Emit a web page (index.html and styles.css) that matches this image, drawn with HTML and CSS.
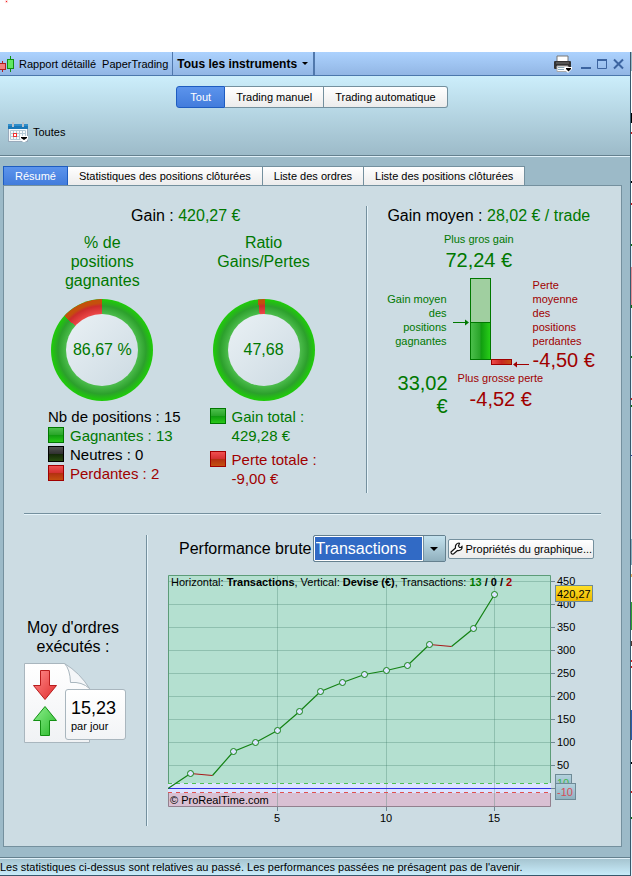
FILE: index.html
```html
<!DOCTYPE html>
<html lang="fr">
<head>
<meta charset="utf-8">
<title>Rapport détaillé</title>
<link rel="stylesheet" href="styles.css">
</head>
<body>
<div class="desktop">
  <span class="marker"></span>
  <main class="window">
    <header class="titlebar">
      <svg class="candles" width="15" height="18" viewBox="0 0 15 18" shape-rendering="crispEdges">
        <path d="M2.500 6v11" stroke="#b02020"/><rect x="-3.500" y="8.500" width="9" height="6" fill="#f08080" stroke="#b02020"/>
        <path d="M10.500 1v16" stroke="#109010"/><rect x="7.500" y="4.500" width="6" height="9" fill="#60e860" stroke="#109010"/>
      </svg>
      <span class="title">Rapport détaillé</span>
      <span class="account">PaperTrading</span>
      <button class="instruments" type="button">Tous les instruments <i class="caret"></i></button>
      <div class="window-actions">
        <button type="button" aria-label="Imprimer"><svg width="20" height="18" viewBox="0 0 20 18">
          <path d="M4 1h11v6H4z" fill="#fff" stroke="#777"/>
          <rect x="1" y="6" width="17" height="8" rx="1" fill="#333"/><path d="M3 8h13" stroke="#777"/>
          <path d="M4 11h11v5.500H4z" fill="#fff" stroke="#aaa"/><path d="M5 12.500h8M5 14.500h6" stroke="#8ab"/>
          <path d="M11.500 12h7.500v2l-4 4-4-4z" fill="#fff"/><path d="M13 13h5v1l-2.500 2.500L13 14z" fill="#000"/>
        </svg></button>
        <button type="button" aria-label="Réduire"><svg width="10" height="12" viewBox="0 0 10 12"><path d="M0 10h10" stroke="#3c64a0" stroke-width="2"/></svg></button>
        <button type="button" aria-label="Agrandir"><svg width="10" height="12" viewBox="0 0 10 12" fill="none"><path d="M.5 1v9.500h9V1" stroke="#3c64a0"/><path d="M0 2h10" stroke="#3c64a0" stroke-width="2"/></svg></button>
        <button type="button" aria-label="Fermer"><svg width="11" height="12" viewBox="0 0 11 12"><path d="M1 1.500l9 9M10 1.500l-9 9" stroke="#3c64a0" stroke-width="2"/></svg></button>
      </div>
    </header>

    <section class="filters">
      <div class="segmented">
        <button type="button" class="selected">Tout</button>
        <button type="button">Trading manuel</button>
        <button type="button">Trading automatique</button>
      </div>
      <button class="period" type="button">
        <svg width="20" height="20" viewBox="0 0 20 20">
          <rect x=".5" y="6.500" width="19" height="13" fill="#f6f9fb" stroke="#9ab"/>
          <path d="M0 2h20v5H0z" fill="#1a78b8"/><path d="M0 3h20" stroke="#48a4dc"/>
          <path d="M5 0v5M15 0v5" stroke="#b8c0c8" stroke-width="2"/>
          <path d="M2.500 8.500h15v9h-15zM2.500 11.500h15M2.500 14.500h15M5.500 8.500v9M8.500 8.500v9M11.500 8.500v9M14.500 8.500v9" fill="none" stroke="#b4cad6"/>
          <rect x="5.500" y="11.500" width="3" height="3" fill="#fff" stroke="#f03030"/>
          <path d="M12 14h8v3l-3 3h-2l-3-3z" fill="#fff"/><path d="M13 15h6v1l-3 2-3-2z" fill="#000"/>
        </svg>
        Toutes
      </button>
    </section>

    <nav class="tabs">
      <button type="button" class="selected">Résumé</button>
      <button type="button">Statistiques des positions clôturées</button>
      <button type="button">Liste des ordres</button>
      <button type="button">Liste des positions clôturées</button>
    </nav>

    <div class="panel">
      <div class="summary">
        <section class="totals">
          <h2>Gain : <b class="gain">420,27 €</b></h2>
          <div class="rings">
            <div class="ring-block">
              <h3>% de<br>positions<br>gagnantes</h3>
              <div class="ring ring-wins"><span>86,67 %</span></div>
              <ul class="legend">
                <li>Nb de positions : 15</li>
                <li class="gain"><i class="swatch green"></i>Gagnantes : 13</li>
                <li><i class="swatch black"></i>Neutres : 0</li>
                <li class="loss"><i class="swatch red"></i>Perdantes : 2</li>
              </ul>
            </div>
            <div class="ring-block">
              <h3>Ratio<br>Gains/Pertes</h3>
              <div class="ring ring-ratio"><span>47,68</span></div>
              <ul class="legend spaced">
                <li class="gain"><i class="swatch green"></i><span>Gain total :<br>429,28 €</span></li>
                <li class="loss"><i class="swatch red"></i><span>Perte totale :<br>-9,00 €</span></li>
              </ul>
            </div>
          </div>
        </section>

        <section class="averages">
          <h2>Gain moyen : <b class="gain">28,02 € / trade</b></h2>
          <div class="best gain"><span>Plus gros gain</span><strong>72,24 €</strong></div>
          <div class="compare">
            <div class="avg-gain gain"><span>Gain moyen des positions gagnantes</span><strong>33,02 €</strong></div>
            <div class="bars">
              <svg width="79" height="90" viewBox="0 0 79 90">
                <defs>
                  <linearGradient id="barGain"><stop offset="0" stop-color="#4cc04c"/><stop offset=".48" stop-color="#28a428"/><stop offset=".52" stop-color="#109c10"/><stop offset="1" stop-color="#28d018"/></linearGradient>
                  <linearGradient id="barLoss"><stop offset="0" stop-color="#f04c4c"/><stop offset=".5" stop-color="#c82820"/><stop offset="1" stop-color="#c45010"/></linearGradient>
                </defs>
                <rect x="17.500" y=".5" width="20" height="44" fill="#a0cfa0" stroke="#007800"/>
                <rect x="17.500" y="44.500" width="20" height="37" fill="url(#barGain)" stroke="#007800"/>
                <rect x="38.500" y="81.500" width="20" height="5" fill="url(#barLoss)" stroke="#a00000"/>
                <path d="M0 44.500h13" stroke="#007800"/><path d="M12 41.500l4 3-4 3z" fill="#007800"/>
                <path d="M64 86.500h12" stroke="#a00000"/><path d="M64 83.500l-4 3 4 3z" fill="#a00000"/>
              </svg>
              <div class="worst loss"><span>Plus grosse perte</span><strong>-4,52 €</strong></div>
            </div>
            <div class="avg-loss loss"><span>Perte moyenne des positions perdantes</span><strong>-4,50 €</strong></div>
          </div>
        </section>
      </div>

      <hr>

      <div class="performance">
        <section class="orders">
          <h2>Moy d'ordres<br>exécutés :</h2>
          <div class="sheet">
            <svg width="67" height="80" viewBox="0 0 67 80">
              <defs>
                <linearGradient id="paper" x2="0" y2="1"><stop offset="0" stop-color="#fff"/><stop offset="1" stop-color="#f0f2f4"/></linearGradient>
                <linearGradient id="down" x2="1" y2="1"><stop offset="0" stop-color="#ff8c8c"/><stop offset="1" stop-color="#e02c2c"/></linearGradient>
                <linearGradient id="up" x2="1" y2="1"><stop offset="0" stop-color="#90f090"/><stop offset="1" stop-color="#28b828"/></linearGradient>
              </defs>
              <path d="M.5.500h40L65.500 25.500v54H.5z" fill="url(#paper)" stroke="#a9b6be"/>
              <path d="M40.500.500Q46 6 46.500 19.500 58 18.500 65.500 25.500 56 10 40.500.500z" fill="#f4f6f8" stroke="#a9b6be"/>
              <path d="M16.500 7.500h9v15h7L21 36.500 9.500 22.500h7z" fill="url(#down)" stroke="#b81c1c"/>
              <path d="M16.500 72.500h9v-15h7L21 43.500 9.500 57.500h7z" fill="url(#up)" stroke="#129012"/>
            </svg>
            <div class="card"><strong>15,23</strong><span>par jour</span></div>
          </div>
        </section>

        <section class="chart">
          <div class="chart-tools">
            <label for="metric">Performance brute</label>
            <div class="combo">
              <select id="metric"><option>Transactions</option></select>
              <span class="combo-arrow"><i class="caret"></i></span>
            </div>
            <button class="properties" type="button">
              <svg width="13" height="13" viewBox="0 0 13 13"><path d="M1 10L5.500 6C5 3.500 6.500 1 9 1l.5.500-1 2.500 1 1.500h1.500L12 4.500c.5 2.500-1.500 4.500-4.500 4L3.500 12Q1 12.500 1 10z" fill="#fff" stroke="#111" stroke-width="1.200"/></svg>
              Propriétés du graphique...
            </button>
          </div>
          <svg class="plot" viewBox="0 0 433 251" role="img" aria-label="Performance brute par transaction">
            <defs>
              <linearGradient id="gold" x2="0" y2="1"><stop offset="0" stop-color="#ffe028"/><stop offset="1" stop-color="#ecb800"/></linearGradient>
              <linearGradient id="steel" x2="0" y2="1"><stop offset="0" stop-color="#b4d2de"/><stop offset="1" stop-color="#8eb0be"/></linearGradient>
            </defs>
            <rect x="0" y="0" width="383" height="208" fill="#b4e0d0"/>
            <rect x="0" y="208" width="383" height="10" fill="#dce4ff"/>
            <rect x="0" y="218" width="383" height="14" fill="#d9c0d3"/>
            <path d="M0 6.500h383M0 29.500h383M0 52.500h383M0 75.500h383M0 98.500h383M0 121.500h383M0 144.500h383M0 167.500h383M0 190.500h383M109.500 0v232M218.500 0v232M326.500 0v232" stroke="#3c7864" stroke-opacity=".3"/>
            <path d="M.5 208V.5h382V208" fill="none" stroke="#5c9c78"/>
            <path d="M.5 218v13.500h382V218" fill="none" stroke="#92808e"/>
            <path d="M383 6.500h4M383 29.500h4M383 52.500h4M383 75.500h4M383 98.500h4M383 121.500h4M383 144.500h4M383 167.500h4M383 190.500h4M383 213.500h4M109.500 232v4M218.500 232v4M326.500 232v4" stroke="#708894"/>
            <path d="M0 208.500h383" stroke="#50c050" stroke-dasharray="4 4"/>
            <path d="M0 217.500h383" stroke="#e05050" stroke-dasharray="4 4"/>
            <path d="M0 213.500h383" stroke="#3030e0"/>
            <g fill="none" stroke="#148214" stroke-width="1.200">
              <path d="M0 213.500L22.500 198.500M44.500 200.500L65.500 176.500 87.500 167.500 109.500 155.500 131.500 136.500 152.500 116.500 174.500 107.500 196.500 99.500 218.500 95.500 239.500 90.500 261.500 69.500M283.500 71.500L305.500 53.500 326.500 19.500"/>
              <path d="M22.500 198.500L44.500 200.500M261.500 69.500L283.500 71.500" stroke="#a81818"/>
            </g>
            <g fill="#dce4ff" stroke="#148214">
              <circle cx="22.500" cy="198.500" r="3"/><circle cx="65.500" cy="176.500" r="3"/><circle cx="87.500" cy="167.500" r="3"/><circle cx="109.500" cy="155.500" r="3"/><circle cx="131.500" cy="136.500" r="3"/><circle cx="152.500" cy="116.500" r="3"/><circle cx="174.500" cy="107.500" r="3"/><circle cx="196.500" cy="99.500" r="3"/><circle cx="218.500" cy="95.500" r="3"/><circle cx="239.500" cy="90.500" r="3"/><circle cx="261.500" cy="69.500" r="3"/><circle cx="305.500" cy="53.500" r="3"/><circle cx="326.500" cy="19.500" r="3"/>
            </g>
            <text x="3" y="11">Horizontal: <tspan class="strong">Transactions</tspan>, Vertical: <tspan class="strong">Devise (€)</tspan>, Transactions: <tspan class="strong won">13</tspan><tspan class="strong"> / 0 / </tspan><tspan class="strong lost">2</tspan></text>
            <text x="2" y="229">© ProRealTime.com</text>
            <g>
              <text x="389" y="10">450</text><text x="389" y="33">400</text><text x="389" y="56">350</text><text x="389" y="79">300</text><text x="389" y="102">250</text><text x="389" y="125">200</text><text x="389" y="148">150</text><text x="389" y="171">100</text><text x="389" y="194">50</text>
            </g>
            <g text-anchor="middle"><text x="109" y="247">5</text><text x="218" y="247">10</text><text x="326" y="247">15</text></g>
            <rect x="387.500" y="10.500" width="37" height="16" fill="url(#gold)" stroke="#6e8a96"/><text x="389" y="23">420,27</text>
            <rect x="387.500" y="199.500" width="16" height="16" fill="url(#steel)" stroke="#6e8a96"/><text x="389" y="212" class="limit-up">10</text>
            <rect x="387.500" y="208.500" width="20" height="16" fill="url(#steel)" stroke="#6e8a96"/><text x="389" y="221" class="limit-down">-10</text>
          </svg>
        </section>
      </div>
    </div>

    <footer>Les statistiques ci-dessus sont relatives au passé. Les performances passées ne présagent pas de l'avenir.</footer>
  </main>
</div>
</body>
</html>
```
FILE: styles.css
```css
* { box-sizing: border-box; }

body {
  margin: 0;
  font: 11px/14px "Liberation Sans", Arial, sans-serif;
  color: #000;
  background: #fff;
}

button {
  margin: 0;
  padding: 0;
  border: 0;
  background: none;
  font: inherit;
  color: inherit;
  white-space: nowrap;
}

h2, h3, ul { margin: 0; padding: 0; }

h2, h3 {
  font-size: 16px;
  line-height: 19px;
  font-weight: normal;
  text-align: center;
}

h2 b { font-weight: normal; }
svg { display: block; flex: none; }

.gain, h3 { color: #007800; }
.loss { color: #a00000; }

.desktop {
  position: relative;
  min-height: 100vh;
  padding: 52px 1px 0 0;
  background:
    linear-gradient(
      #fff 52px, #9cbac8 52px 71px, #fff 71px 113px,
      #000 113px 123px, #fff 123px 132px, #d02020 132px 134px, #fff 134px 181px,
      #000 181px 183px, #fff 183px 203px, #d02020 203px 205px, #fff 205px 244px,
      #107010 244px 246px, #e8f0fa 246px 267px, #e88c94 267px 305px,
      #107010 305px 308px, #e8f0fa 308px 356px, #107010 356px 358px,
      #e8f0fa 358px 398px, #d02020 398px 400px, #e8f0fa 400px 405px,
      #107010 405px 407px, #e8f0fa 407px 455px, #3040a0 455px 456px,
      #e8f0fa 456px 539px, #8cb0c0 539px 565px, #fff 565px 574px,
      #f0b060 574px 577px, #fff 577px 602px, #30a030 602px 630px,
      #fff 630px 641px, #503830 641px 646px, #fff 646px 660px,
      #d02020 660px 662px, #fff 662px 666px, #d02020 666px 668px,
      #fff 668px 710px, #2c5cac 710px 740px, #fff 740px 762px,
      #000 762px 764px, #fff 764px 791px, #d02020 791px 793px,
      #fff 793px 817px, #107010 817px 819px, #e8f0fa 819px
    ) right / 1px 100% no-repeat,
    #fff;
}

.marker {
  position: absolute;
  top: 1px;
  left: 6px;
  width: 1px;
  height: 1px;
  background: #f02020;
  box-shadow: 0 0 1px 1px #ffd8d8;
}

.window {
  display: flex;
  flex-direction: column;
  min-height: calc(100vh - 52px);
  border-right: 1px solid #38586c;
  background: #9cbac8;
}

.titlebar {
  display: flex;
  align-items: center;
  height: 24px;
  border-bottom: 1px solid #4c78ac;
  background: linear-gradient(#acd2fe, #92b6e4);
}

.title { margin-left: 4px; }
.account { margin: 0 4px 0 6px; }

.instruments {
  display: flex;
  align-items: center;
  gap: 5px;
  height: 23px;
  padding: 0 5px 0 4px;
  border-left: 1px solid #5078ac;
  border-right: 2px solid #5078ac;
  font-size: 12px;
  font-weight: bold;
}

.caret {
  border: solid transparent;
  border-width: 4px 4px 0;
  border-top-color: #000;
}

.instruments .caret { border-width: 3px 3px 0; border-top-color: #000; }

.window-actions {
  display: flex;
  align-items: center;
  gap: 6px;
  margin-left: auto;
  padding-right: 6px;
}

.window-actions button:first-child { margin-right: 2px; }

.filters {
  height: 81px;
  padding: 10px 6px 0 8px;
  border-bottom: 1px solid #e0f0f8;
  box-shadow: inset 0 -1px #64808e;
  background: linear-gradient(#cceefb, #9cbac8);
}

.segmented { display: flex; justify-content: center; margin-right: 8px; }

.segmented button, .tabs button {
  padding: 0 11px;
  border: 1px solid #74909e;
  background: linear-gradient(#fff, #ececec);
}

.segmented button { height: 22px; border-left-width: 0; }
.segmented button:first-child { padding: 0 13px; border-left-width: 1px; border-radius: 3px 0 0 3px; }
.segmented button:last-child { border-radius: 0 3px 3px 0; }

.segmented .selected, .tabs .selected {
  border-color: #1e5cc0;
  background: linear-gradient(#5c94ec, #427cdc);
  color: #fff;
}

.period { display: flex; align-items: center; gap: 5px; margin-top: 14px; }

.tabs { display: flex; margin: 9px 0 0 3px; }
.tabs button { height: 19px; border-left-width: 0; border-bottom-width: 0; }
.tabs button:first-child { border-left-width: 1px; }

.panel {
  flex: 1;
  margin: 0 8px 10px 3px;
  padding: 20px;
  border: 1px solid #74909e;
  background: #ccdce3;
}

.summary {
  display: grid;
  grid-template-columns: minmax(0, 19fr) minmax(0, 13fr);
  height: 287px;
}

.totals {
  padding-right: 24px;
  border-right: 1px solid #74909e;
  box-shadow: 1px 0 #e6f4fa;
}

.totals h2 { padding-left: 6px; }

.rings {
  display: grid;
  grid-template-columns: 1fr 1fr;
  gap: 5px;
  margin-top: 8px;
}

.ring-block { display: grid; grid-template-rows: 66px 102px auto; }

.ring {
  position: relative;
  display: grid;
  place-items: center;
  justify-self: center;
  width: 102px;
  height: 102px;
  border-radius: 50%;
  background: radial-gradient(circle, #4cbc4c 36px, #2ca02c 44px, #20c80c 50px);
  color: #007800;
  font-size: 16px;
}

.ring::before {
  content: "";
  position: absolute;
  inset: 0;
  border-radius: 50%;
  background: radial-gradient(circle, #ec4848 36px, #cc2c2c 44px, #c4500c 47px);
}

.ring-wins::before { mask-image: conic-gradient(transparent 312deg, #000 312deg); }
.ring-ratio::before { mask-image: conic-gradient(from -7deg, #000 8deg, transparent 8deg); }

.ring span {
  position: relative;
  display: grid;
  place-items: center;
  width: 72px;
  height: 72px;
  border-radius: 50%;
  background: linear-gradient(135deg, #eaf1f5, #ccdae2);
  white-space: nowrap;
}

.legend {
  margin-top: 6px;
  padding-left: 24px;
  list-style: none;
  font-size: 15px;
  line-height: 19px;
  white-space: nowrap;
}

.legend li { display: flex; gap: 6px; }
.legend.spaced { display: grid; gap: 5px; align-content: start; }

.swatch { width: 16px; height: 16px; margin-top: 1px; border: 1px solid; }
.green { border-color: #007800; background: linear-gradient(#4cc04c, #28a428 50%, #109c10 52%, #28c818); }
.black { border-color: #000; background: linear-gradient(#505050, #303030 50%, #142808 52%, #284c10); }
.red { border-color: #a00000; background: linear-gradient(#f05050, #d43030 50%, #b43010 52%, #c45010); }

.averages { padding-left: 10px; }
.averages strong { display: block; font-size: 20px; line-height: 24px; font-weight: normal; white-space: nowrap; }
.averages span { display: block; }

.best { margin-top: 7px; padding-right: 20px; text-align: center; }
.best strong { margin-top: 2px; }

.compare {
  display: grid;
  grid-template-columns: 73px 79px 1fr;
  margin-top: 6px;
}

.avg-gain { padding: 14px 2px 0 10px; text-align: right; }
.avg-gain span { padding-right: 1px; }
.avg-gain strong { margin-top: 24px; white-space: normal; line-height: 23px; }
.bars { padding-left: 3px; }
.worst { margin-top: 3px; white-space: nowrap; }
.worst span { padding-left: 5px; }
.worst strong { margin-top: 2px; padding-left: 17px; }
.avg-loss { padding-left: 4px; }
.avg-loss span { padding-right: 20px; }

hr {
  height: 2px;
  margin: 20px 0;
  border: 0;
  border-top: 1px solid #74909e;
  background: #e6f4fa;
}

.performance { display: flex; }

.orders {
  display: flex;
  flex-direction: column;
  justify-content: center;
  width: 123px;
  border-right: 1px solid #74909e;
  box-shadow: 1px 0 #e6f4fa;
}

.orders h2 { padding-right: 24px; }
.sheet { position: relative; margin-top: 7px; }

.card {
  position: absolute;
  top: 26px;
  left: 41px;
  width: 61px;
  height: 51px;
  padding: 8px 5px;
  border: 1px solid #a9b6be;
  border-radius: 3px;
  background: linear-gradient(#fff, #f2f4f6);
}

.card strong, .card span { display: block; }
.card strong { font-size: 18px; line-height: 21px; font-weight: normal; }

.chart { flex: 1; min-width: 0; padding-left: 21px; }

.chart-tools { display: flex; align-items: center; height: 27px; padding-left: 11px; }
.chart-tools label { font-size: 16px; white-space: nowrap; }

.combo { position: relative; width: 133px; height: 27px; margin: 0 2px 0 1px; }

.combo select {
  appearance: none;
  width: 100%;
  height: 100%;
  padding: 0 24px 0 2px;
  border: 1px solid #64808e;
  border-radius: 2px;
  background: #316ac5;
  box-shadow: inset 0 0 0 1px #fff;
  color: #fff;
  font: 16px "Liberation Sans", Arial, sans-serif;
}

.combo-arrow {
  position: absolute;
  top: 1px;
  right: 1px;
  bottom: 1px;
  display: grid;
  place-items: center;
  width: 22px;
  border-left: 1px solid #74909e;
  background: linear-gradient(#c4e2ee, #90b0be);
  box-shadow: -1px 0 #fff;
  pointer-events: none;
}

.properties {
  display: flex;
  align-items: center;
  gap: 3px;
  height: 20px;
  padding: 0 1px;
  border: 1px solid #74909e;
  border-radius: 2px;
  background: linear-gradient(#fff, #ececec);
}

.plot {
  width: 100%;
  margin-top: 13px;
  font-size: 11px;
}

.plot .strong { font-weight: bold; white-space: pre; }
.plot .won { fill: #007800; }
.plot .lost { fill: #a00000; }
.plot .limit-up { fill: #40b850; }
.plot .limit-down { fill: #d84c58; }

footer {
  height: 19px;
  padding-top: 2px;
  border-top: 1px solid #64808e;
  border-bottom: 1px solid #38586c;
  background: linear-gradient(#a4c2ce, #c8ecfa);
  box-shadow: inset 0 1px #e0f0f8;
  white-space: nowrap;
}
```
